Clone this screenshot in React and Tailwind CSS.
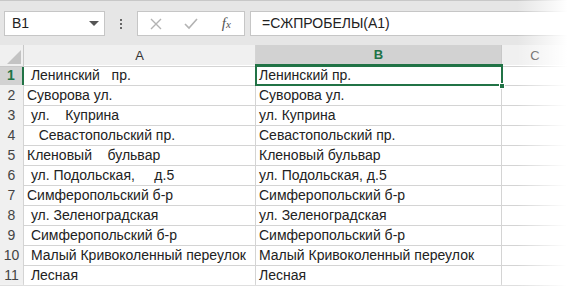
import React from 'react';

const rows = [
  [' Ленинский   пр.', 'Ленинский пр.'],
  ['Суворова ул.', 'Суворова ул.'],
  [' ул.    Куприна', 'ул. Куприна'],
  ['   Севастопольский пр.', 'Севастопольский пр.'],
  ['Кленовый    бульвар', 'Кленовый бульвар'],
  [' ул. Подольская,     д.5', 'ул. Подольская, д.5'],
  ['Симферопольский б-р', 'Симферопольский б-р'],
  [' ул. Зеленоградская', 'ул. Зеленоградская'],
  [' Симферопольский б-р', 'Симферопольский б-р'],
  [' Малый Кривоколенный переулок', 'Малый Кривоколенный переулок'],
  [' Лесная', 'Лесная'],
];

function FormulaBar() {
  return (
    <div className="h-[45px] bg-[#e6e6e6] border-t border-[#c8c8c8] flex items-start pt-[10px] pl-[4px]">
      {/* Name box */}
      <div className="w-[101px] h-[25px] bg-white border border-[#c6c6c6] flex items-center justify-between pl-[7px] pr-[5px]">
        <span className="text-[14px] text-[#222]">B1</span>
        <svg width="10" height="6" viewBox="0 0 10 6">
          <path d="M0 0 L10 0 L5 5 Z" fill="#555" />
        </svg>
      </div>
      {/* Dots */}
      <div className="w-[32px] h-[25px] flex flex-col items-center justify-center gap-[2px]">
        <span className="w-[2px] h-[2px] bg-[#666]" />
        <span className="w-[2px] h-[2px] bg-[#666]" />
        <span className="w-[2px] h-[2px] bg-[#666]" />
      </div>
      {/* Buttons */}
      <div className="w-[108px] h-[25px] bg-white border border-[#c6c6c6] flex items-center">
        <div className="w-[36px] flex justify-center">
          <svg width="12" height="12" viewBox="0 0 12 12">
            <path d="M1 1 L11 11 M11 1 L1 11" stroke="#b3b3b3" strokeWidth="1.4" />
          </svg>
        </div>
        <div className="w-[36px] flex justify-center">
          <svg width="14" height="12" viewBox="0 0 14 12">
            <path d="M1 6 L5 10 L13 1" stroke="#b3b3b3" strokeWidth="1.6" fill="none" />
          </svg>
        </div>
        <div className="w-[36px] flex justify-center">
          <span className="text-[15px] italic text-[#555] font-['Liberation_Serif',serif]">
            f<span className="text-[11px]">x</span>
          </span>
        </div>
      </div>
      {/* Formula input */}
      <div className="ml-[5px] flex-1 h-[25px] bg-white border border-[#c6c6c6] border-r-0 flex items-center pl-[11px]">
        <span className="text-[14px] text-[#222]">=СЖПРОБЕЛЫ(A1)</span>
      </div>
    </div>
  );
}

function Sheet() {
  const cols = 'grid-cols-[24px_232px_246px_1fr]';
  return (
    <div className="relative">
      <div className={`grid ${cols} h-[20px] bg-[#f0f0f0] text-[13px]`}>
        <div className="border-r border-b border-[#c8c8c8] bg-[#f0f0f0] relative">
          <svg className="absolute right-[2px] bottom-[2px]" width="14" height="14" viewBox="0 0 14 14">
            <path d="M14 0 L14 14 L0 14 Z" fill="#c3c3c3" />
          </svg>
        </div>
        <div className="border-r border-b border-[#d4d4d4] flex items-center justify-center text-[#333]">A</div>
        <div className="border-r border-b-2 border-b-[#217346] border-r-[#c8c8c8] bg-[#d2d2d2] flex items-center justify-center font-bold text-[#217346]">B</div>
        <div className="border-b border-[#d4d4d4] flex items-center text-[#333]">
          <span className="w-[66px] text-center">C</span>
        </div>
      </div>
      {rows.map(([a, b], i) => (
        <div key={i} className={`grid ${cols} h-[20px] text-[14px] leading-[20px] text-[#222]`}>
          <div
            className={`border-r border-b flex items-center justify-center text-[14px] ${
              i === 0
                ? 'bg-[#d2d2d2] text-[#217346] font-bold border-r-2 border-r-[#217346] border-b-[#c8c8c8]'
                : 'bg-[#f0f0f0] text-[#444] border-[#d4d4d4]'
            }`}
          >
            {i + 1}
          </div>
          <div className="border-r border-b border-[#d4d4d4] pl-[3px] whitespace-pre overflow-hidden flex items-center">{a}</div>
          <div className="border-r border-b border-[#d4d4d4] pl-[3px] whitespace-pre overflow-hidden flex items-center">{b}</div>
          <div className="border-b border-[#d4d4d4]" />
        </div>
      ))}
      {/* Selection */}
      <div className="absolute left-[255px] top-[19px] w-[248px] h-[22px] border-2 border-[#217346] pointer-events-none" />
      <div className="absolute left-[499px] top-[38px] w-[6px] h-[6px] bg-[#217346] border border-white" />
    </div>
  );
}

export default function App() {
  return (
    <div className="relative w-[567px] h-[293px] overflow-hidden bg-white font-['Liberation_Sans',Arial,sans-serif]">
      <FormulaBar />
      <Sheet />
      {/* Faded edges */}
      <div className="absolute top-0 right-0 w-[50px] h-full bg-gradient-to-r from-transparent to-white pointer-events-none" />
      <div className="absolute bottom-0 left-0 w-full h-[10px] bg-gradient-to-b from-transparent to-white pointer-events-none" />
    </div>
  );
}
